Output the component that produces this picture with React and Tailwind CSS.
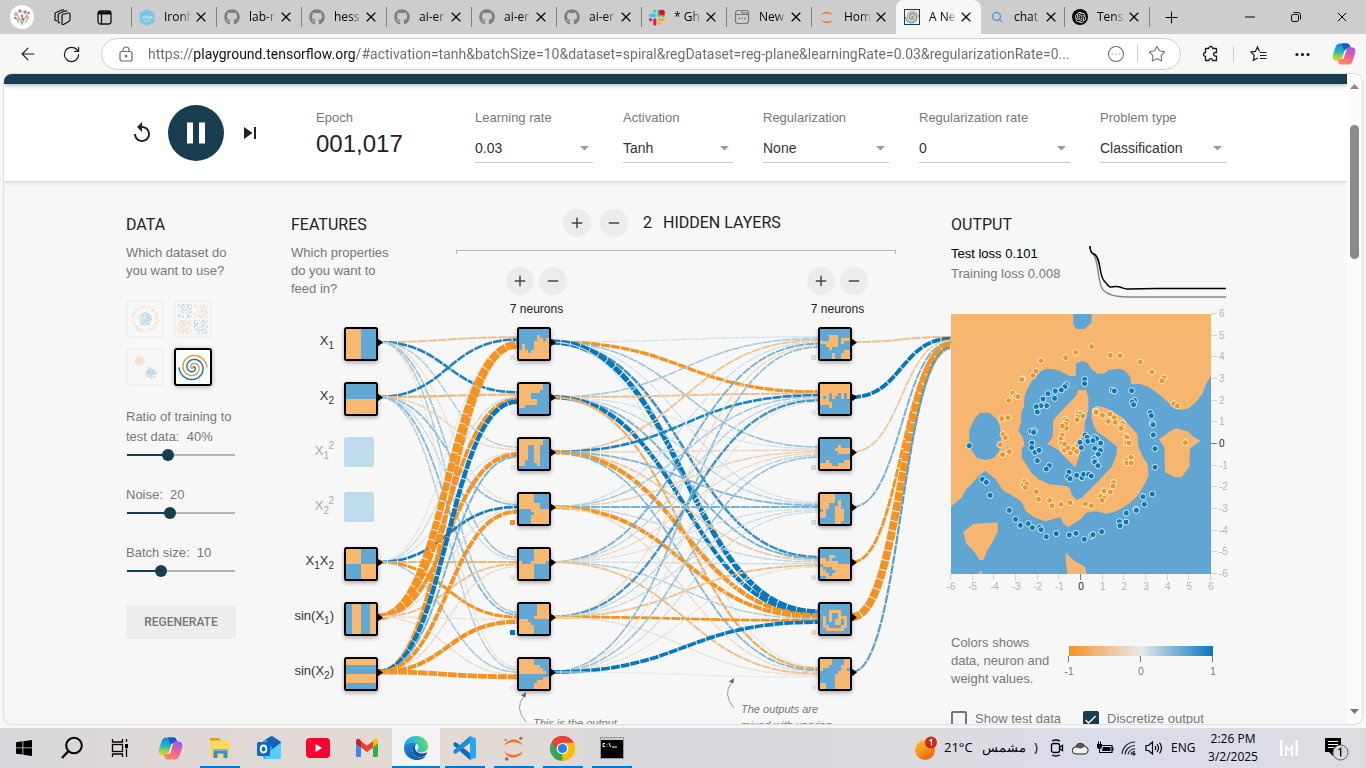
import React from "react";
import { FaGithub } from "react-icons/fa";
import { SiOpenai } from "react-icons/si";
import { MdReplay, MdPause, MdSkipNext, MdAdd, MdRemove, MdCheck } from "react-icons/md";
import { ArrowLeft, RotateCw, Star, Plus, Minus, X, Search, MoreHorizontal, CircleEllipsis } from "lucide-react";

const ORANGE = [245, 147, 34];
const GREY = [232, 234, 235];
const BLUE = [8, 119, 189];

function weightColor(w) {
  const end = w < 0 ? ORANGE : BLUE;
  const t = Math.min(1, Math.abs(w));
  const c = GREY.map((v, i) => Math.round(v + (end[i] - v) * t));
  return `rgb(${c.join(",")})`;
}

function makeRandom(seed) {
  let a = seed;
  return () => {
    a = (a + 0x6d2b79f5) | 0;
    let t = Math.imul(a ^ (a >>> 15), 1 | a);
    t = (t + Math.imul(t ^ (t >>> 7), 61 | t)) ^ t;
    return ((t ^ (t >>> 14)) >>> 0) / 4294967296;
  };
}

/* ---------- brand marks ---------- */

function CopilotMark({ size, id }) {
  return (
    <svg width={size} height={size} viewBox="0 0 24 24" aria-hidden="true">
      <defs>
        <linearGradient id={id + "a"} x1="0.3" y1="0" x2="0.2" y2="1">
          <stop offset="0" stopColor="#1b8be0" />
          <stop offset="0.45" stopColor="#22b4c8" />
          <stop offset="0.7" stopColor="#8ccf4d" />
          <stop offset="1" stopColor="#f6cf2e" />
        </linearGradient>
        <linearGradient id={id + "b"} x1="0.8" y1="0" x2="0.3" y2="1">
          <stop offset="0" stopColor="#9a5cf0" />
          <stop offset="0.5" stopColor="#ee5fa0" />
          <stop offset="1" stopColor="#ff8a4c" />
        </linearGradient>
      </defs>
      <path d="M8 1.5h7c1.6 0 2.3 1 2.8 2.5l.8 2.5h-3.2c-1.6 0-2.4 1-2.9 2.6l-2.4 7.4c-.5 1.5-1.3 2.3-2.8 2.3H4.2C1 18.8 0 16 1 12.5L3.3 5.5C4.2 2.8 5.5 1.5 8 1.5z" fill={`url(#${id}a)`} />
      <path d="M9.5 1.5H15c1.6 0 2.3 1 2.8 2.5l.8 2.5h-3.2c-1.6 0-2.4 1-2.9 2.6z" fill="#1556c9" />
      <path d="M16 22.5H9c-1.6 0-2.3-1-2.8-2.5l-.8-2.5h3.2c1.6 0 2.4-1 2.9-2.6l2.4-7.4c.5-1.5 1.3-2.3 2.8-2.3h3.1c3.2 0 4.2 2.8 3.2 6.3l-2.3 7c-.9 2.7-2.2 4-4.7 4z" fill={`url(#${id}b)`} />
      <path d="M10.3 17l2.9-9.5h1.2L11.5 17z" fill="#fff" />
    </svg>
  );
}

function JupyterMark({ size, moons }) {
  return (
    <svg width={size} height={size} viewBox="0 0 24 24" aria-hidden="true">
      <path d="M3 9.5C4.5 5.5 8 3.3 12 3.3s7.5 2.2 9 6.2C19 7.3 15.8 6 12 6S5 7.3 3 9.5z" fill="#f37726" />
      <path d="M3 14.5c1.5 4 5 6.2 9 6.2s7.5-2.2 9-6.2c-2 2.2-5.2 3.5-9 3.5s-7-1.3-9-3.5z" fill="#f37726" />
      {moons && (
        <g fill="#767677">
          <circle cx="19" cy="2.2" r="1.5" />
          <circle cx="5.5" cy="22" r="1.7" />
          <circle cx="4.5" cy="3.6" r="1" />
        </g>
      )}
    </svg>
  );
}

function SlackMark() {
  return (
    <svg width="17" height="17" viewBox="0 0 24 24" aria-hidden="true">
      <g fill="#36c5f0"><rect x="0" y="6.5" width="11" height="4.6" rx="2.3" /><rect x="6.4" y="0" width="4.6" height="4.6" rx="2" /></g>
      <g fill="#2eb67d"><rect x="13" y="0" width="4.6" height="11" rx="2.3" /><rect x="19.2" y="6.5" width="4.6" height="4.6" rx="2" /></g>
      <g fill="#ecb22e"><rect x="13" y="13" width="11" height="4.6" rx="2.3" /><rect x="13" y="19.2" width="4.6" height="4.6" rx="2" /></g>
      <g fill="#e01e5a"><rect x="6.4" y="13" width="4.6" height="11" rx="2.3" /><rect x="0" y="13" width="4.6" height="4.6" rx="2" /></g>
      <circle cx="19.5" cy="4.5" r="4.2" fill="#f00" />
    </svg>
  );
}

function IronMark() {
  return (
    <svg width="16" height="17" viewBox="0 0 16 17" aria-hidden="true">
      <path d="M8 0l7.5 4v9L8 17 .5 13V4z" fill="#7cc5e2" />
      <path d="M4 7v3M6 10V7h1.5v1.5H6M9 7h1.5v3H9zM12 10V7l1 3V7M4.5 12h7" stroke="#c4e8f4" fill="none" strokeWidth="0.8" />
    </svg>
  );
}

function PageMark() {
  return (
    <svg width="16" height="16" viewBox="0 0 16 16" fill="none" stroke="#777" strokeWidth="1.2" aria-hidden="true">
      <rect x="1.5" y="1.5" width="13" height="13" rx="2.5" />
      <path d="M1.5 5.5h13M8 1.5v2.5h6.5" />
      <path d="M4.5 9.5h1.5M7.2 9.5h1.5M10 9.5h1.5" strokeWidth="1.6" />
    </svg>
  );
}

function spiralPath(delta, cx, cy, radius) {
  const pts = [];
  for (let i = 0; i <= 60; i++) {
    const r = (i / 60) * radius;
    const t = 1.75 * (i / 60) * 2 * Math.PI + delta;
    pts.push(`${(cx + r * Math.sin(t)).toFixed(2)} ${(cy - r * Math.cos(t)).toFixed(2)}`);
  }
  return "M" + pts.join("L");
}

function SpiralMark() {
  return (
    <svg width="16" height="16" viewBox="0 0 16 16" aria-hidden="true">
      <rect x="0.5" y="0.5" width="15" height="15" fill="#e9f1f7" stroke="#183d4e" />
      <path d={spiralPath(0, 8, 8, 6.5)} fill="none" stroke="#4b9bd0" strokeWidth="1.3" />
      <path d={spiralPath(Math.PI, 8, 8, 6.5)} fill="none" stroke="#f0a850" strokeWidth="1.3" />
    </svg>
  );
}

/* ---------- browser chrome ---------- */

const TABS = [
  { title: "Ironh", icon: <IronMark /> },
  { title: "lab-r", icon: <FaGithub size={16} color="#7f7f7f" /> },
  { title: "hess", icon: <FaGithub size={16} color="#7f7f7f" /> },
  { title: "ai-er", icon: <FaGithub size={16} color="#7f7f7f" /> },
  { title: "ai-er", icon: <FaGithub size={16} color="#7f7f7f" /> },
  { title: "ai-er", icon: <FaGithub size={16} color="#7f7f7f" /> },
  { title: "* Gh", icon: <SlackMark /> },
  { title: "New", icon: <PageMark /> },
  { title: "Hom", icon: <JupyterMark size={19} /> },
  { title: "A Ne", icon: <SpiralMark />, active: true },
  { title: "chat", icon: <Search size={12} color="#5b9bd5" strokeWidth={3} />, bare: true },
  {
    title: "Tens",
    icon: (
      <span className="flex size-4 items-center justify-center rounded-full bg-black">
        <SiOpenai size={11} color="#fff" />
      </span>
    ),
  },
];

function Tab({ tab }) {
  const shell = tab.active
    ? "flex h-full w-[85px] shrink-0 items-center rounded-t-lg border-l border-[#f7f7f7] bg-[#f7f7f7]"
    : tab.bare
      ? "flex h-5 w-[83px] shrink-0 items-center border-l border-transparent"
      : "flex h-5 w-[85px] shrink-0 items-center border-l border-[#808080]";
  return (
    <div className={shell}>
      <button type="button" className="flex items-center gap-[9px] pl-[7px]">
        <span className="flex w-4 justify-center">{tab.icon}</span>
        <span className="w-[28px] whitespace-nowrap text-left text-xs text-black [mask-image:linear-gradient(to_right,black_60%,transparent)]">
          {tab.title}
        </span>
      </button>
      <button type="button" aria-label="Close tab" className="ml-px text-black">
        <X size={16} strokeWidth={1.75} />
      </button>
    </div>
  );
}

function BrowserTop() {
  return (
    <header className="font-['Open_Sans','Noto_Sans',sans-serif]">
      <div className="flex h-[34px] items-center bg-[#cdcdcd]">
        <div className="flex w-[131px] shrink-0 items-center pl-2.5">
          <svg width="24" height="24" viewBox="0 0 24 24" aria-hidden="true">
            <circle cx="12" cy="12" r="12" fill="#fff" />
            <path d="M12 20V9M12 19L7 9M12 19l5-10M9 18l-4-6M15 18l4-6" stroke="#8aa874" strokeWidth="1" />
            <g fill="#e9a58c"><circle cx="6" cy="9" r="2" /><circle cx="17" cy="12" r="1.8" /><circle cx="9" cy="14" r="1.6" /></g>
            <g fill="#9384b5"><circle cx="10" cy="6" r="1.8" /><circle cx="15" cy="7" r="1.8" /><circle cx="12" cy="11" r="1.3" /></g>
            <g fill="#b9605c"><circle cx="18.5" cy="8" r="1.2" /><circle cx="13" cy="14" r="1.2" /><circle cx="5.5" cy="13" r="1.2" /></g>
          </svg>
          <button type="button" aria-label="Workspaces" className="ml-5">
            <svg width="17" height="17" viewBox="0 0 17 17" fill="none" stroke="#111" strokeWidth="1.2">
              <path d="M8.5 5.5l6-1.5q1.5-.2 1.5 1.3v5.5q0 1-1 1.4l-5 3q-2 1-2-1V7q0-1.2.5-1.5z" />
              <path d="M6 13.5l-1 .3q-.8 0-.8-1V6q0-1 1-1.5l6-2.5q1.5-.5 1.8.7" />
              <path d="M3 11.5l-1 .2q-1 0-1-1V5q0-1 1-1.5l6-2.5q1.5-.5 1.8.5" />
            </svg>
          </button>
          <button type="button" aria-label="Tab actions" className="ml-[26px]">
            <svg width="15" height="15" viewBox="0 0 15 15" fill="none" stroke="#111" strokeWidth="1.3">
              <rect x="1" y="1" width="13" height="13" rx="2.5" />
              <path d="M1 3h13" strokeWidth="3" /><path d="M4.5 4v10" />
            </svg>
          </button>
        </div>
        <nav className="flex h-full items-center">
          {TABS.map((t, i) => <Tab key={i} tab={t} />)}
        </nav>
        <button type="button" aria-label="New tab" className="flex h-5 items-center border-l border-[#808080] pl-3">
          <Plus size={19} strokeWidth={1.25} />
        </button>
        <div className="ml-auto flex items-center gap-[30px] pr-4">
          <button type="button" aria-label="Minimize"><Minus size={16} strokeWidth={1.5} /></button>
          <button type="button" aria-label="Restore">
            <svg width="16" height="16" viewBox="0 0 16 16" fill="none" stroke="#111">
              <rect x="3.5" y="5.5" width="7" height="7" rx="1.5" />
              <path d="M5.5 3.5H10q2.5 0 2.5 2.5v4.5" />
            </svg>
          </button>
          <button type="button" aria-label="Close"><X size={16} strokeWidth={1.5} /></button>
        </div>
      </div>
      <div className="flex h-10 items-center bg-[#f7f7f7] text-[#1a1a1a]">
        <button type="button" aria-label="Back" className="ml-[18px]"><ArrowLeft size={20} strokeWidth={1.4} /></button>
        <button type="button" aria-label="Refresh" className="ml-6"><RotateCw size={19} strokeWidth={1.5} /></button>
        <div className="ml-5 flex h-8 min-w-0 flex-1 items-center rounded-full border border-[#cfcfcf] bg-white pl-[17px] text-[#6b6b6b]">
          <svg width="14" height="16" viewBox="0 0 14 16" fill="none" stroke="currentColor" strokeWidth="1.2" aria-hidden="true">
            <rect x="1" y="5.5" width="12" height="9.5" rx="2" />
            <path d="M4 5.5V4a3 3 0 0 1 6 0v1.5" /><circle cx="7" cy="10.2" r="0.8" fill="currentColor" />
          </svg>
          <input
            aria-label="Address"
            readOnly
            defaultValue="https://playground.tensorflow.org/#activation=tanh&batchSize=10&dataset=spiral&regDataset=reg-plane&learningRate=0.03&regularizationRate=0..."
            className="ml-[15px] min-w-0 flex-1 bg-[linear-gradient(to_right,#6b6b6b_46px,#111_46px,#111_208px,#6b6b6b_208px)] bg-clip-text font-['Roboto',sans-serif] text-sm text-transparent outline-none"
          />
          <button type="button" aria-label="Site options" className="ml-3"><CircleEllipsis size={18} strokeWidth={1.4} /></button>
          <span className="ml-3 h-[18px] w-px bg-[#cfcfcf]" />
          <button type="button" aria-label="Favorite" className="ml-2.5 mr-3.5"><Star size={18} strokeWidth={1.4} /></button>
        </div>
        <button type="button" aria-label="Extensions" className="ml-5">
          <svg width="18" height="18" viewBox="0 0 18 18" fill="none" stroke="#1a1a1a" strokeWidth="1.3" strokeLinejoin="round">
            <path d="M5.5 3.5h2.2a2 2 0 0 1 4 0h3.8v4h-1.2a1.8 1.8 0 0 0 0 3.6h1.2v4.4h-4a1.8 1.8 0 0 0-3.6 0H4.5v-4a2 2 0 1 1 0-4v-4z" />
          </svg>
        </button>
        <span className="ml-3.5 h-4 w-px bg-[#cfcfcf]" />
        <button type="button" aria-label="Favorites" className="ml-4">
          <svg width="17" height="17" viewBox="0 0 17 17" fill="none" stroke="#1a1a1a" strokeWidth="1.2">
            <path d="M9.5 5.5L7.5 1 5.4 5.4.8 6l3.4 3.3-.8 5L7.8 12M10 6.5h6.5M10 9.5h6.5M10 12.5h6.5" />
          </svg>
        </button>
        <button type="button" aria-label="More" className="ml-[26px]"><MoreHorizontal size={19} strokeWidth={2} /></button>
        <button type="button" aria-label="Copilot" className="ml-5 mr-2.5"><CopilotMark size={24} id="cpTop" /></button>
      </div>
    </header>
  );
}

/* ---------- controls bar ---------- */

const SELECTS = [
  { id: "rate", label: "Learning rate", value: "0.03", width: "w-[118px]" },
  { id: "act", label: "Activation", value: "Tanh", width: "w-[110px]" },
  { id: "reg", label: "Regularization", value: "None", width: "w-[126px]" },
  { id: "regRate", label: "Regularization rate", value: "0", width: "w-[151px]" },
  { id: "problem", label: "Problem type", value: "Classification", width: "w-[126px]" },
];

function ControlsBar() {
  return (
    <section className="border-b border-[#dcdcdc] bg-white shadow-[0_1px_4px_rgba(0,0,0,0.12)]">
      <div className="mx-auto flex h-[97px] max-w-[1101px] items-center pl-px">
        <div className="flex w-[190px] items-center gap-3.5 pl-1">
          <button type="button" aria-label="Reset"><MdReplay size={24} color="#222" /></button>
          <button type="button" aria-label="Pause" className="flex size-14 items-center justify-center rounded-full bg-[#183d4e] text-white">
            <MdPause size={36} />
          </button>
          <button type="button" aria-label="Step"><MdSkipNext size={24} color="#222" /></button>
        </div>
        <div className="w-[159px] pt-0.5">
          <div className="text-[13px] leading-5 text-[#777]">Epoch</div>
          <output className="block text-2xl leading-8 text-[#222]">001,017</output>
        </div>
        <div className="flex gap-[30px] pt-1.5">
          {SELECTS.map((s) => (
            <div key={s.id} className={s.width}>
              <label htmlFor={s.id} className="block text-[13px] leading-5 text-[#777]">{s.label}</label>
              <div className="relative mt-2 border-b border-[#c8c8c8] pb-0.5">
                <select id={s.id} className="block h-6 w-full appearance-none bg-transparent text-sm text-[#333] outline-none">
                  <option>{s.value}</option>
                </select>
                <svg className="pointer-events-none absolute right-1 top-2.5" width="9" height="5" viewBox="0 0 9 5" aria-hidden="true">
                  <path d="M0 0h9L4.5 4.5z" fill="#999" />
                </svg>
              </div>
            </div>
          ))}
        </div>
      </div>
    </section>
  );
}

/* ---------- data column ---------- */

function scatter(kind) {
  const rnd = makeRandom(kind.length * 7919 + 13);
  const gauss = () => rnd() + rnd() + rnd() + rnd() - 2;
  const pts = [];
  if (kind === "circle") {
    for (let i = 0; i < 150; i++) {
      const r = Math.sqrt(rnd()) * 6.5, a = rnd() * 6.283;
      pts.push([17 + r * Math.cos(a), 17 + r * Math.sin(a), 1]);
    }
    for (let i = 0; i < 140; i++) {
      const r = 10.5 + rnd() * 3.5, a = rnd() * 6.283;
      pts.push([17 + r * Math.cos(a), 17 + r * Math.sin(a), 0]);
    }
  } else if (kind === "xor") {
    for (let i = 0; i < 420; i++) {
      const x = 2 + rnd() * 30, y = 2 + rnd() * 30;
      if (Math.abs(x - 17) > 1 && Math.abs(y - 17) > 1) pts.push([x, y, (x < 17) === (y < 17) ? 1 : 0]);
    }
  } else {
    for (let i = 0; i < 200; i++) {
      pts.push([11.5 + gauss() * 3.6, 11 + gauss() * 3.6, 0]);
      pts.push([23 + gauss() * 3.6, 23 + gauss() * 3.6, 1]);
    }
  }
  return pts;
}

function DatasetButton({ kind, selected }) {
  const cls = selected
    ? "size-[38px] rounded-[3px] border-2 border-black bg-white shadow-[0_1px_5px_rgba(0,0,0,0.3)]"
    : "size-[38px] rounded-[3px] border-2 border-[#f0f0f0]";
  return (
    <button type="button" aria-label={kind} className={cls}>
      <svg width="34" height="34" viewBox="0 0 34 34">
        {kind === "spiral" ? (
          <g fill="none" strokeWidth="1.4">
            <path d={spiralPath(0, 17, 17.5, 14)} stroke="#0877bd" />
            <path d={spiralPath(Math.PI, 17, 17.5, 14)} stroke="#f59322" />
          </g>
        ) : (
          scatter(kind).map((p, i) => (
            <rect key={i} x={Math.floor(p[0])} y={Math.floor(p[1])} width="1" height="1" fill={p[2] ? "#c3dbea" : "#f7e0c8"} />
          ))
        )}
      </svg>
    </button>
  );
}

function Slider({ id, label, text, min, max, value, step }) {
  const p = ((value - min) / (max - min)) * 100;
  return (
    <div className="mt-[22px]">
      <label htmlFor={id} className="block text-[13px] leading-5">{`${label}\u00a0 ${text}`}</label>
      <input
        id={id}
        type="range"
        min={min}
        max={max}
        step={step}
        defaultValue={value}
        style={{ backgroundImage: `linear-gradient(to right,#183d4e ${p}%,#b5b5b5 ${p}%)` }}
        className="-mx-[5px] block h-4 w-[120px] appearance-none bg-[length:calc(100%-12px)_2px] bg-center bg-no-repeat [&::-webkit-slider-thumb]:size-3 [&::-webkit-slider-thumb]:appearance-none [&::-webkit-slider-thumb]:rounded-full [&::-webkit-slider-thumb]:bg-[#183d4e]"
      />
    </div>
  );
}

function Heading({ children }) {
  return <h2 className="font-['Roboto',sans-serif] text-base leading-6 text-[#222]">{children}</h2>;
}

function DataColumn() {
  return (
    <section className="w-[165px] shrink-0 pl-px pt-[31px] text-[13px] text-[#777]">
      <Heading>DATA</Heading>
      <p className="mt-[7px] w-[110px] leading-[18px]">Which dataset do you want to use?</p>
      <div className="mt-5 grid w-[86px] grid-cols-2 gap-2.5">
        <DatasetButton kind="circle" />
        <DatasetButton kind="xor" />
        <DatasetButton kind="gauss" />
        <DatasetButton kind="spiral" selected />
      </div>
      <div className="-mt-px w-[110px]">
        <Slider id="ratio" label="Ratio of training to test data:" text="40%" min={10} max={90} step={10} value={40} />
        <Slider id="noise" label="Noise:" text="20" min={0} max={50} step={5} value={20} />
        <Slider id="batch" label="Batch size:" text="10" min={1} max={30} step={1} value={10} />
        <button type="button" className="mt-[26px] h-[34px] w-full rounded-[2px] bg-[#ededed] font-['Roboto',sans-serif] text-xs font-medium text-[#777]">
          REGENERATE
        </button>
      </div>
    </section>
  );
}

/* ---------- network ---------- */

const B = "BBBBBBBBBB";
const O = "OOOOOOOOOO";
const repeat = (row, n) => Array(n).fill(row);

const FEATURES = [
  { y: 342, base: "X", sub: "1", map: repeat("OOOOOBBBBB", 10) },
  { y: 397, base: "X", sub: "2", map: [...repeat(B, 5), ...repeat(O, 5)] },
  { y: 452, base: "X", sub: "1", sup: "2", off: true },
  { y: 507, base: "X", sub: "2", sup: "2", off: true },
  { y: 562, pair: true, map: [...repeat("OOOOOBBBBB", 5), ...repeat("BBBBBOOOOO", 5)] },
  { y: 617, sin: "1", map: repeat("BBOOOBBBOO", 10) },
  { y: 672, sin: "2", map: [O, O, B, B, B, O, O, O, B, B] },
];

const ROWS = [342, 397, 452, 507, 562, 617, 672];
const INPUT_ROWS = [342, 397, 562, 617, 672];

const LAYER1 = [
  [B, B, "BBBBBBOBBB", "BBBBBBOOBO", "BBBBBOOOOO", "BOBBBOOOOO", "BOBBBOOOOO", "OOOBOOOOOO", O, O],
  ["OOOOOOOOBB", "OOOOOOOOBB", "OOOOOOOBBB", "OOOOBBBBBB", "OOOOBBBBBB", "OOOOOOBBBB", "OOOOOOBBBB", "OOBBBBBBBB", B, B],
  ["OOOOOOOOBB", "OOOOOOOOBB", ...repeat("OOOBBOOBBB", 5), "OOBBBOOBBB", "OOBBBBOBBB", B],
  ["OOOOOBBBBB", "OOOOOBBBBB", "OOOOOBBBBB", "OOOOOOOBBB", "OOOOOOOBBB", "BBBBOOOOOO", "BBBBBOOOOO", ...repeat("BBBBOOOOOO", 3)],
  [...repeat("BBBBBOOOOO", 4), "OBBBOOOOOB", ...repeat("OOOOOBBBBB", 5)],
  [...repeat("BBBBBBOOOO", 4), "BBBBBOOOOO", "OOOBBBBBBB", "OOOOBBBBBB", ...repeat("OOOOOBBBBB", 3)],
  ["OOOOOBBBBB", "OOOOOBBBBB", "OOOOOOOBBB", "OOOOOOOOBB", "OOOOOOOOOB", B, "BBBBBBBBOO", "BBBBBBOOOO", "BBBBBOOOOO", "BBBBBOOOOO"],
];

const LAYER2 = [
  [B, B, "BBBOOOBBBB", "BBBOOOBOOO", "OOOOOOBOBB", "BBOOOOBBBB", "BBBOBBBBBB", "BBBBBBBBOO", "BBBBOBBOOO", "BBBBOBBOOO"],
  [O, O, O, "OOOBOOBOBO", "OBOBOBBOBO", "OOOBBBBBBB", "OOOOBBBBBB", "BBBOBBBBBB", B, B],
  [B, B, "BBBBBBOBBB", "BBBBBOOOOO", "BBBBBBOOOO", B, B, "BBOBBBBBOO", "OOOOBBOOOO", O],
  ["OOOOOBBBBB", "OOOOOBBBBB", "OOOOOBOBBB", "OOOBBBOBBB", "OOOBBOOBBB", "BOBBBOOOBB", "OOBBBOOOBB", "OOBBBOOOBB", "BBBBBOOOBB", "BBBBBOOBBB"],
  [B, B, "BBBOOBBBBB", "OOBOBBBBBB", "OOOOOOBBBB", "BOOOOOOOOO", "OBBBOOOOOO", "OOBBBOOOOO", "OOOBOOOOOO", "BBOOOOOOOO"],
  [B, B, "BBBOOOOBBB", "BBBOBBOBBB", "BOBOBBOOOB", "BOBOBOOBOB", "BOBBBOOBOB", "BOOBBBBOOB", "BBOOOOOOBB", B],
  ["OOOOBBBBOO", "OOOOBBBBOO", "OOOBBBBOOO", "OBBBBBBOOB", "BBBBBBOOOO", "BBBBBOOOOO", "BBBBBOOOOO", "BBBBBOOOOO", "OOBBBOOOOO", "OOBBBOOOOO"],
];

const W1 = [
  [-0.5, 0.9, 0.25, -0.15, 0.35, 0.3, -0.12],
  [0.9, -0.6, -0.25, 0.4, 0.15, 0.45, 0.25],
  [0.05, 0.15, 0.1, 0.95, -0.6, -1.1, 0.3],
  [-3.2, -1.5, -1.7, 0.1, -0.5, -0.15, -0.2],
  [-1.5, 2, 0.5, -1.6, -0.2, -1.8, -2.1],
];

const W2 = [
  [0.1, -1.3, 0.35, 0.1, 0.8, 2.4, 0.05],
  [0.3, -0.5, 0.08, 0.2, 0.5, 1.8, -0.7],
  [-0.45, 0.9, -0.25, 0.45, -0.4, -1.9, 0.45],
  [0.12, 0.3, -0.3, 0.5, 0.18, -1.6, -0.2],
  [0.5, 0.2, -0.2, 0.1, 0.15, 0.25, -0.5],
  [-0.2, 0.75, 0.2, 0.15, -0.5, -1, -0.15],
  [0.4, -0.1, 0.35, 0.12, -0.12, 1.5, 0.03],
];

const W3 = [-0.5, 1.6, -0.4, 0.5, -1, -3.8, 0.65];

const BIAS1 = [-0.1, -0.02, 0.03, -1, -0.1, 1, -0.02];
const BIAS2 = [0.1, -0.03, 0.15, 0.12, 0.08, -0.2, 0.02];

function Link({ x1, y1, x2, y2, w }) {
  const mx = (x1 + x2) / 2;
  return (
    <path
      d={`M${x1} ${y1}C${mx} ${y1} ${mx} ${y2} ${x2} ${y2}`}
      stroke={weightColor(w)}
      strokeWidth={1 + (9 * Math.abs(w)) / 5}
      strokeDasharray="9 1"
      fill="none"
    />
  );
}

function Tile({ x, y, map }) {
  const cells = [];
  map.forEach((row, r) => {
    let c = 0;
    while (c < 10) {
      let e = c;
      while (e < 10 && row[e] === row[c]) e++;
      if (row[c] === "O") {
        const left = c === 0 ? -3 : c * 3;
        const right = e === 10 ? 33 : e * 3;
        const top = r === 0 ? -3 : r * 3;
        const bottom = r === 9 ? 33 : (r + 1) * 3;
        cells.push(<rect key={r + "-" + c} x={left} y={top} width={right - left} height={bottom - top} fill="#f9b870" />);
      }
      c = e;
    }
  });
  return (
    <g transform={`translate(${x} ${y - 15})`}>
      <rect x="0" y="0" width="34" height="34" rx="2.5" fill="#000" filter="url(#tileShadow)" />
      <path d="M33 11l6 4.5-6 4.5z" fill="#000" />
      <g transform="translate(2 2)" clipPath="url(#tileClip)">
        <rect width="30" height="30" fill="#62a8d5" />
        <g filter="url(#tileSmooth)">{cells}</g>
      </g>
    </g>
  );
}

function FeatureLabel({ f }) {
  const small = "text-[10px]";
  if (f.sup) {
    return (
      <g fill="#aaa">
        <text x="329" y={f.y + 3} textAnchor="end" className="text-[13px]">X<tspan dy="4" className={small}>{f.sub}</tspan></text>
        <text x="334" y={f.y - 3} textAnchor="end" className={small}>{f.sup}</text>
      </g>
    );
  }
  if (f.pair) {
    return (
      <text x="334" y={f.y + 3} textAnchor="end" fill="#333" className="text-[13px]">
        X<tspan dy="4" className={small}>1</tspan><tspan dy="-4">X</tspan><tspan dy="4" className={small}>2</tspan>
      </text>
    );
  }
  if (f.sin) {
    return (
      <text x="334" y={f.y + 3} textAnchor="end" fill="#333" className="text-[13px]">
        sin(X<tspan dy="4" className={small}>{f.sin}</tspan><tspan dy="-4">)</tspan>
      </text>
    );
  }
  return (
    <text x="334" y={f.y + 3} textAnchor="end" fill="#333" className="text-[13px]">
      {f.base}<tspan dy="4" className={small}>{f.sub}</tspan>
    </text>
  );
}

function Network() {
  const offset = (i, n) => ((i - (n - 1) / 2) / n) * 12;
  return (
    <svg viewBox="290 325 661 420" width="661" height="420" className="block" role="img" aria-label="Neural network">
      <defs>
        <filter id="tileShadow" x="-30%" y="-30%" width="160%" height="170%">
          <feDropShadow dx="0" dy="2" stdDeviation="2" floodColor="#000" floodOpacity="0.3" />
        </filter>
        <filter id="tileSmooth"><feGaussianBlur stdDeviation="0.7" /></filter>
        <clipPath id="tileClip"><rect width="30" height="30" /></clipPath>
      </defs>
      {W1.map((ws, s) => ws.map((w, d) => (
        <Link key={`a${s}-${d}`} x1={378} y1={INPUT_ROWS[s]} x2={517} y2={ROWS[d] + offset(s, 5)} w={w} />
      )))}
      {W2.map((ws, s) => ws.map((w, d) => (
        <Link key={`b${s}-${d}`} x1={551} y1={ROWS[s]} x2={818} y2={ROWS[d] + offset(s, 7)} w={w} />
      )))}
      {W3.map((w, s) => (
        <Link key={`c${s}`} x1={852} y1={ROWS[s]} x2={951} y2={342 + offset(s, 7)} w={w} />
      ))}
      {FEATURES.map((f) => (
        <g key={f.y}>
          <FeatureLabel f={f} />
          {f.off
            ? <rect x="344" y={f.y - 15} width="30" height="30" rx="2.5" fill="#c0daed" />
            : <Tile x={344} y={f.y} map={f.map} />}
        </g>
      ))}
      {ROWS.map((y, i) => (
        <g key={y}>
          <rect x="510" y={y + 13} width="5" height="5" fill={weightColor(BIAS1[i])} />
          <rect x="811" y={y + 13} width="5" height="5" fill={weightColor(BIAS2[i])} />
          <Tile x={517} y={y} map={LAYER1[i]} />
          <Tile x={818} y={y} map={LAYER2[i]} />
        </g>
      ))}
      <g fill="none" stroke="#999">
        <path d="M526 722q-12-14-2-26" />
        <path d="M734 708q-12-14-2-26" />
      </g>
      <path d="M526 692l-5 3.5 4.5 2zM734 678l-5 3.5 4.5 2z" fill="#666" />
      <g fill="#777" className="text-[11px] italic">
        <text x="533" y="727">This is the output</text>
        <text x="741" y="713">The outputs are</text>
        <text x="741" y="729">mixed with varying</text>
      </g>
    </svg>
  );
}

function PlusMinus({ what }) {
  const cls = "flex size-7 items-center justify-center rounded-full bg-[#ececec] text-[#444]";
  return (
    <>
      <button type="button" aria-label={`Add ${what}`} className={cls}><MdAdd size={18} /></button>
      <button type="button" aria-label={`Remove ${what}`} className={cls}><MdRemove size={18} /></button>
    </>
  );
}

function NeuronControls() {
  return (
    <div>
      <div className="flex gap-[5px]"><PlusMinus what="neuron" /></div>
      <div className="mt-1 text-center text-xs leading-5 text-[#222]">7 neurons</div>
    </div>
  );
}

function NetworkColumn() {
  return (
    <section className="w-[661px] shrink-0">
      <div className="flex h-[143px]">
        <div className="w-[166px] pl-px pt-[31px] text-[13px] text-[#777]">
          <Heading>FEATURES</Heading>
          <p className="mt-[7px] w-[110px] leading-[18px]">Which properties do you want to feed in?</p>
        </div>
        <div className="w-[440px] pt-[27px]">
          <div className="flex items-center gap-[9px] pl-[107px]">
            <PlusMinus what="layer" />
            <div className="ml-1.5 font-['Roboto',sans-serif] text-base leading-6 text-[#222]">
              2<span className="ml-[11px]">HIDDEN LAYERS</span>
            </div>
          </div>
          <div className="mt-[13px] h-1 border-x border-t border-[#b5b5b5]" />
          <div className="mt-[13px] flex justify-between pl-[50px] pr-7">
            <NeuronControls />
            <NeuronControls />
          </div>
        </div>
      </div>
      <Network />
    </section>
  );
}

/* ---------- output ---------- */

const ORANGE_DOTS = [
  [485, 350], [437, 367], [541, 376], [570, 377], [407, 383], [333, 392], [631, 396], [318, 424], [309, 437], [666, 426],
  [702, 443], [696, 452], [278, 447], [275, 449], [248, 489], [257, 498], [264, 500], [236, 512], [731, 521], [742, 528],
  [215, 566], [234, 563], [219, 614], [226, 623], [210, 644], [238, 665], [218, 674], [766, 638], [445, 549], [452, 552],
  [459, 558], [443, 561], [441, 569], [496, 543], [498, 547], [517, 556], [540, 552], [553, 563], [535, 574], [556, 577],
  [578, 580], [576, 590], [573, 595], [406, 568], [411, 573], [407, 583], [409, 595], [397, 588], [397, 616], [393, 627],
  [395, 640], [399, 655], [403, 661], [404, 642], [414, 654], [421, 669], [431, 657], [440, 665], [444, 645], [587, 617],
  [591, 622], [590, 638], [597, 639], [590, 691], [591, 699], [603, 682], [604, 699], [284, 755], [280, 766], [290, 762],
  [286, 773], [319, 785], [326, 808], [359, 811], [366, 827], [393, 823], [420, 818], [466, 822], [484, 827], [551, 758],
  [549, 768], [522, 783], [541, 786], [513, 799], [522, 804], [516, 811],
];

const BLUE_DOTS = [
  [464, 448], [464, 461], [409, 464], [405, 470], [394, 480], [376, 483], [374, 505], [354, 491], [339, 507], [350, 527],
  [333, 527], [319, 530], [322, 546], [547, 480], [553, 483], [605, 482], [614, 511], [607, 516], [611, 524], [661, 548],
  [664, 557], [667, 579], [669, 584], [670, 615], [675, 656], [675, 712], [118, 647], [303, 604], [313, 602], [311, 607],
  [306, 639], [305, 653], [315, 667], [327, 661], [322, 692], [358, 707], [349, 717], [157, 748], [169, 757], [180, 796],
  [238, 841], [257, 868], [271, 886], [295, 881], [307, 893], [329, 892], [333, 899], [349, 920], [379, 911], [418, 915],
  [438, 910], [463, 928], [484, 918], [489, 914], [515, 905], [568, 875], [570, 887], [588, 876], [589, 849], [618, 837],
  [619, 841], [643, 823], [639, 800], [667, 792], [450, 637], [454, 653], [465, 615], [471, 622], [473, 634], [494, 622],
  [500, 626], [489, 632], [512, 639], [494, 655], [511, 661], [505, 673], [493, 686], [497, 692], [494, 696], [504, 707],
  [417, 726], [413, 740], [420, 746], [440, 736], [456, 743], [461, 733], [476, 733], [484, 738],
];

const TICKS = [-6, -5, -4, -3, -2, -1, 0, 1, 2, 3, 4, 5, 6];

function HeatMap() {
  const o = "#f6b66f";
  const b = "#61a6d3";
  return (
    <svg viewBox="945 308 284 286" width="284" height="286" className="-ml-1.5 -mt-1.5 block" role="img" aria-label="Decision boundary">
      <svg x="951" y="314" width="260" height="260" viewBox="63 252 780 780">
        <rect x="63" y="252" width="780" height="780" fill={b} />
        <polygon fill={o} points="63,252 843,252 843,438 828,462 817,492 800,514 778,534 757,540 738,534 715,518 690,495 657,472 630,462 603,462 601,440 585,422 570,416 535,420 522,431 502,431 485,418 472,400 457,392 438,402 437,438 418,438 392,424 370,417 345,417 325,430 302,458 290,482 283,500 282,530 274,550 273,580 265,602 278,620 284,645 275,655 276,685 292,708 304,728 326,748 358,763 410,768 420,775 424,792 440,810 455,803 480,778 510,748 545,710 559,675 561,650 530,625 502,606 490,585 484,560 488,538 500,527 522,532 550,545 580,565 603,592 622,612 626,652 638,680 652,700 656,735 645,760 622,798 595,823 560,843 527,851 500,844 468,848 452,868 415,891 402,882 390,862 345,874 312,862 286,842 275,815 247,797 218,780 197,748 165,722 146,738 130,756 107,780 97,800 63,830" />
        <polygon fill={o} points="445,480 468,480 475,500 475,540 465,575 462,605 452,640 447,682 436,711 415,692 385,660 352,642 368,622 370,570 388,550 412,524 438,497" />
        <polygon fill={b} points="430,252 485,252 485,278 463,297 440,297 430,282" />
        <polygon fill={b} points="150,548 178,548 200,566 210,590 214,625 207,665 190,685 165,690 140,683 118,652 118,600 135,564" />
        <polygon fill={o} points="722,603 738,595 775,605 790,620 812,632 790,648 780,656 778,710 755,742 735,742 705,727 703,652 687,628" />
        <polygon fill={o} points="100,905 130,882 203,877 203,905 187,938 172,960 160,990 150,990 130,962 108,940" />
        <polygon fill={o} points="407,968 432,992 465,1010 470,1032 413,1032 408,1000" />
        <rect x="148" y="1024" width="9" height="8" fill={o} />
        <g stroke="#fff" strokeOpacity="0.8" strokeWidth="3">
          {ORANGE_DOTS.map((p, i) => <circle key={"o" + i} cx={p[0]} cy={p[1]} r="9" fill="#f59322" />)}
          {BLUE_DOTS.map((p, i) => <circle key={"b" + i} cx={p[0]} cy={p[1]} r="9" fill="#0877bd" />)}
        </g>
      </svg>
      <g className="text-[10px]">
        {TICKS.map((t) => {
          const x = 1081 + (t * 260) / 12;
          const y = 444 - (t * 260) / 12;
          const fill = t === 0 ? "#222" : "#b5b5b5";
          return (
            <g key={t} fill={fill} stroke="none">
              <rect x={Math.round(x) - 1} y="574" width="1" height="6" fill={t === 0 ? "#777" : "#d5d5d5"} />
              <text x={x} y="590" textAnchor="middle">{t}</text>
              <rect x="1211" y={Math.round(y) - 1} width="6" height="1" fill={t === 0 ? "#777" : "#d5d5d5"} />
              <text x="1219" y={y + 3}>{t}</text>
            </g>
          );
        })}
      </g>
    </svg>
  );
}

function OutputColumn() {
  return (
    <section className="w-[275px] shrink-0 pt-[31px] text-[13px] text-[#777]">
      <Heading>OUTPUT</Heading>
      <div className="mt-[7px] flex h-[70px] justify-between">
        <div className="leading-5">
          <div className="text-black">Test loss 0.101</div>
          <div>Training loss 0.008</div>
        </div>
        <svg width="137" height="56" viewBox="1089 244 137 56" fill="none" aria-label="Loss history" role="img">
          <path d="M1090 246c0 5 1 7 3 8 3 3 4 9 5 17 1 8 2 15 5 19 4 4 10 7 24 7h99" stroke="#888" strokeWidth="1.5" />
          <path d="M1090 246c0 5 1 7 4 8 4 2 5 8 6 14 1 7 2 11 5 14 2 2 3 4 5 5 3 0 6-1 10 0 3 1 4 2 7 2l30-.5h69" stroke="#000" strokeWidth="1.5" />
        </svg>
      </div>
      <HeatMap />
      <div className="mt-10 flex gap-1">
        <p className="w-[108px] leading-[18px]">Colors shows data, neuron and weight values.</p>
        <svg width="156" height="36" viewBox="1063 642 156 36" className="mt-2" role="img" aria-label="Color scale">
          <defs>
            <linearGradient id="scale">
              <stop offset="0" stopColor="#f59322" /><stop offset="0.5" stopColor="#e8eaeb" /><stop offset="1" stopColor="#0877bd" />
            </linearGradient>
          </defs>
          <rect x="1069" y="646" width="144" height="10" fill="url(#scale)" />
          <path d="M1068.5 656v6M1140.5 656v6M1212.5 656v6" stroke="#777" />
          <g fill="#777" textAnchor="middle" className="text-[10px]">
            <text x="1069" y="675">-1</text><text x="1141" y="675">0</text><text x="1213" y="675">1</text>
          </g>
        </svg>
      </div>
      <div className="mt-5 flex">
        <label className="flex w-[132px] items-center gap-2 leading-[22px]">
          <input type="checkbox" className="size-4 appearance-none rounded-[2px] border-2 border-[#757575]" />
          Show test data
        </label>
        <label className="relative flex items-center gap-2 leading-[22px]">
          <input type="checkbox" defaultChecked className="size-4 appearance-none rounded-[2px] bg-[#183d4e]" />
          <MdCheck size={15} color="#fff" className="pointer-events-none absolute left-0 top-1" />
          Discretize output
        </label>
      </div>
    </section>
  );
}

function Page() {
  return (
    <div className="flex min-h-0 flex-1 bg-[#f7f7f7] px-1 pb-1">
      <div className="flex min-w-0 flex-1 overflow-hidden rounded-lg bg-[#f7f7f7] shadow-[0_0_2px_rgba(0,0,0,0.35)]">
        <main className="min-w-0 flex-1 overflow-hidden font-['Liberation_Sans',Arial,sans-serif]">
          <div className="relative h-2.5 bg-[#183d4e] shadow-[0_1px_5px_rgba(0,0,0,0.35)]" />
          <ControlsBar />
          <div className="mx-auto flex max-w-[1101px]">
            <DataColumn />
            <NetworkColumn />
            <OutputColumn />
          </div>
        </main>
        <div className="flex w-[15px] shrink-0 flex-col items-center bg-[#fcfcfc] py-2.5" aria-hidden="true">
          <svg width="9" height="5" viewBox="0 0 9 5"><path d="M0 5h9L4.5 0z" fill="#888" /></svg>
          <div className="mt-9 h-[134px] w-[9px] rounded-full bg-[#8a8a8a]" />
          <svg width="9" height="5" viewBox="0 0 9 5" className="mt-auto"><path d="M0 0h9L4.5 5z" fill="#777" /></svg>
        </div>
      </div>
    </div>
  );
}

/* ---------- taskbar ---------- */

const APPS = [
  { name: "Copilot", icon: <CopilotMark size={25} id="cpTask" /> },
  {
    name: "File Explorer", open: true,
    icon: (
      <svg width="24" height="24" viewBox="0 0 24 24">
        <path d="M2 2h9l2 3v4H2z" fill="#dba118" /><path d="M2 4.5h20V21H2z" fill="#ffd766" />
        <path d="M5.5 13h14v9h-4v-4.5h-6V22h-4z" fill="#2f8fd8" /><path d="M5.5 13h14v2h-14z" fill="#6fb9ea" />
      </svg>
    ),
  },
  {
    name: "Outlook",
    icon: (
      <svg width="26" height="26" viewBox="0 0 26 26">
        <path d="M7 6l8-5 10 6v14q0 3-3 3H9q-2 0-2-2z" fill="#28a8ea" /><path d="M10 4.5L16 1l9 6-8 7z" fill="#1a5fb4" />
        <path d="M25 8L9 20v2q0 2 2 2h11q3 0 3-3z" fill="#50d0f8" />
        <rect x="1" y="7" width="13" height="14" rx="1.5" fill="#0f6cbd" />
        <ellipse cx="7.5" cy="14" rx="2.8" ry="3.5" fill="none" stroke="#fff" strokeWidth="1.8" />
      </svg>
    ),
  },
  {
    name: "YouTube",
    icon: (
      <svg width="24" height="24" viewBox="0 0 24 24"><rect x="0" y="2" width="24" height="20" rx="4" fill="#ff0033" /><path d="M9.5 8v8l6.5-4z" fill="#fff" /></svg>
    ),
  },
  {
    name: "Gmail",
    icon: (
      <svg width="24" height="24" viewBox="0 0 24 24">
        <path d="M1 6v13.5q0 1.5 1.5 1.5H6V10z" fill="#4285f4" /><path d="M23 6v13.5q0 1.5-1.5 1.5H18V10z" fill="#34a853" />
        <path d="M18 5v6.5l5-4V5.5q0-4-4-2z" fill="#fbbc04" /><path d="M1 7.5l5 4V5L5 3.5q-4-2-4 2z" fill="#c5221f" />
        <path d="M6 5l6 4.6L18 5v6.5l-6 4.6-6-4.6z" fill="#ea4335" />
      </svg>
    ),
  },
  {
    name: "Edge", open: true, active: true,
    icon: (
      <svg width="26" height="26" viewBox="0 0 26 26">
        <defs>
          <linearGradient id="eg1" x1="0" y1="0.5" x2="1" y2="0.3"><stop offset="0" stopColor="#1b9de2" /><stop offset="0.5" stopColor="#2cc3c8" /><stop offset="1" stopColor="#6be04b" /></linearGradient>
          <linearGradient id="eg2" x1="0" y1="0" x2="1" y2="1"><stop offset="0" stopColor="#1b8fe0" /><stop offset="1" stopColor="#0c4a9a" /></linearGradient>
        </defs>
        <path d="M1 12C1.5 5.5 6.5 1 13 1c7 0 12 5 12 10.5 0 3.5-3 6-6.5 6-3 0-4.5-1-4.5-2 0-.7 1.5-1.5 1.5-3.5 0-2.5-2.5-4.5-6-4.5C5.5 7.5 2 9.5 1 12z" fill="url(#eg1)" />
        <path d="M1 12c1-3 4.5-4.5 8.5-4.5 2 0 3.5.5 4.5 1.5-3.5.5-5 3.5-4.5 7 .6 4.5 4.5 7 9 6.5 1.5-.2 3-.8 4.5-1.5-2 2.5-5.5 4-9 4C6.5 25 .5 19.5 1 12z" fill="url(#eg2)" />
        <path d="M9.5 16c-.5-3.5 1-6 3.5-6.5-1 1.5-1.5 3.5-.5 5.5 1.5 3 6 4.5 10.5 2.5.8-.4 1.3.3.8 1.2-2 3-5 3.8-7 3.6-4-.4-6.8-2.8-7.3-6.3z" fill="#10559f" />
      </svg>
    ),
  },
  {
    name: "VS Code", open: true,
    icon: (
      <svg width="26" height="26" viewBox="0 0 26 26">
        <path d="M3.5 7l-2 1v2.5L18 25v-7z" fill="#0a6cb5" />
        <path d="M1.5 15.5V18l2 1L18 8V1z" fill="#1d8ddb" />
        <path d="M18 1l6 2.5v19L18 25z" fill="#2ca5ef" />
      </svg>
    ),
  },
  { name: "Jupyter", open: true, icon: <JupyterMark size={25} moons /> },
  {
    name: "Chrome", open: true,
    icon: (
      <svg width="25" height="25" viewBox="0 0 24 24">
        <path d="M12 12L1.6 6A12 12 0 0 1 22.4 6z" fill="#ea4335" /><path d="M12 12L22.4 6A12 12 0 0 1 12 24z" fill="#fbbc04" />
        <path d="M12 12v12A12 12 0 0 1 1.6 6z" fill="#34a853" /><path d="M12 6.5h10.7L22.4 6A12 12 0 0 0 1.6 6l5.6 8.5z" fill="#ea4335" />
        <path d="M16.8 14.8L12 24A12 12 0 0 0 22.7 6.5H12z" fill="#fbbc04" />
        <circle cx="12" cy="12" r="5.6" fill="#fff" /><circle cx="12" cy="12" r="4.4" fill="#2b7de9" />
      </svg>
    ),
  },
  {
    name: "Terminal", open: true,
    icon: (
      <svg width="24" height="24" viewBox="0 0 24 24">
        <rect x="0.5" y="1.5" width="23" height="21" fill="#000" stroke="#999" /><path d="M1 3h22" stroke="#ccc" strokeWidth="2" />
        <path d="M5 7.5H3v3h2M7 8v.6M7 10v.6M9 7l1.5 4M12 11h5" stroke="#fff" fill="none" />
      </svg>
    ),
  },
];

function TaskButton({ app }) {
  const bg = app.active ? "flex h-full w-12 items-center justify-center bg-[#f3f2f4]" : "flex h-full w-10 items-center justify-center";
  const line = app.active ? "absolute bottom-0 h-0.5 w-12 bg-[#0078d7]" : "absolute bottom-0 h-0.5 w-10 bg-[#0078d7]";
  return (
    <button type="button" aria-label={app.name} className="relative flex h-full w-[49px] items-center justify-center">
      <span className={bg}>{app.icon}</span>
      {app.open && <span className={line} />}
    </button>
  );
}

function Taskbar() {
  return (
    <footer className="flex h-10 shrink-0 items-center bg-[linear-gradient(to_right,#d8d6dc,#dfd8d6_14%,#e4dad2_32%,#dad8de_48%,#dcdade_68%,#dadcea_80%,#dcdce0)] font-['Open_Sans','Noto_Sans',sans-serif] text-xs text-black">
      <button type="button" aria-label="Start" className="flex w-12 justify-center">
        <svg width="16" height="16" viewBox="0 0 16 16"><path d="M0 2.2L6.5 1.3v6.2H0zM7.3 1.2L16 0v7.5H7.3zM0 8.3h6.5v6.2L0 13.7zM7.3 8.3H16V16l-8.7-1.2z" /></svg>
      </button>
      <button type="button" aria-label="Search" className="flex w-12 justify-center">
        <svg width="24" height="24" viewBox="0 0 24 24" fill="none" stroke="#000" strokeWidth="2"><circle cx="14" cy="9.5" r="7.8" /><path d="M8.5 15L2 22" strokeWidth="2.4" /></svg>
      </button>
      <button type="button" aria-label="Task view" className="mr-0.5 flex w-12 justify-center">
        <svg width="18" height="18" viewBox="0 0 18 18" fill="none" stroke="#000" strokeWidth="1.3">
          <rect x="1.5" y="5.5" width="10" height="7" /><path d="M1.5 0v3h10V0M1.5 18v-3h10v3M15.5 0v3M15.5 9.5V18" /><path d="M15.5 5v4" strokeWidth="3" />
        </svg>
      </button>
      {APPS.map((a) => <TaskButton key={a.name} app={a} />)}
      <div className="ml-auto flex h-full items-center">
        <svg width="24" height="26" viewBox="0 0 24 26" aria-hidden="true">
          <defs><linearGradient id="sun" x1="0" y1="0" x2="0.6" y2="1"><stop offset="0" stopColor="#fdbb2c" /><stop offset="0.5" stopColor="#f79a1e" /><stop offset="1" stopColor="#ee6510" /></linearGradient></defs>
          <circle cx="11" cy="15" r="10" fill="url(#sun)" /><circle cx="17" cy="7.5" r="6" fill="#c42b1c" />
          <path d="M15.5 6l2-1.5v6" stroke="#fff" fill="none" strokeWidth="1.2" />
        </svg>
        <span className="ml-1.5 w-9 text-[13px]">21°C</span>
        <span className="w-[46px] text-[13px]" lang="ar" dir="rtl">مشمس</span>
        <span className="ml-2 w-3 text-[13px]">)</span>
        <svg className="ml-[3px]" width="16" height="18" viewBox="0 0 16 18" fill="none" stroke="#000" strokeWidth="1.3"><rect x="2.5" y="4.5" width="8" height="9" rx="2" /><path d="M11 8l2.5-1.5v5L11 10M3 2q4-2 8 0M3 16q4 2 8 0" /></svg>
        <svg className="ml-[7px]" width="17" height="14" viewBox="0 0 17 14"><path d="M4 13a3.5 3.5 0 0 1-.5-7A5 5 0 0 1 13 5.500 3.800 3.800 0 0 1 13 13z" fill="#f0f0f0" stroke="#222" /><path d="M3.5 6.5A5 5 0 0 1 13 5.5l-4 2z" fill="#555" /></svg>
        <svg className="ml-[7px]" width="18" height="14" viewBox="0 0 18 14"><path d="M6 4.5h10v7H4" fill="none" stroke="#000" strokeWidth="1.2" /><path d="M7 6h7.5v4H6zM16 6.5h1.5v3H16zM1 3h5v3q0 2-2.5 2T1 6zM2 .5h1V3H2zM4 .5h1V3H4zM3 8h1v4H3z" /></svg>
        <svg className="ml-[7px]" width="17" height="16" viewBox="0 0 17 16" fill="none" stroke="#222" strokeWidth="1.2"><path d="M1 14A13 13 0 0 1 14 2M4 14.5A10 10 0 0 1 14 5.5M7 14.5A7 7 0 0 1 14 8.8M10 14.5a4 4 0 0 1 4-3" /><circle cx="13" cy="14" r="1" fill="#222" /></svg>
        <svg className="ml-[7px]" width="18" height="16" viewBox="0 0 18 16" fill="none" stroke="#000" strokeWidth="1.2"><path d="M1 5.5h2.5L7.5 2v12l-4-3.5H1zM10 6q1.5 2 0 4M12 4q3 4 0 8M14.5 2.5q4 5.500 0 11" /></svg>
        <span className="ml-2 w-6">ENG</span>
        <div className="ml-2.5 w-[56px] text-center leading-[18px]"><div>2:26 PM</div><div>3/2/2025</div></div>
        <svg className="ml-[18px]" width="20" height="18" viewBox="0 0 20 18" aria-hidden="true"><path d="M1 1h2.5v16H1zM16.5 1H19v16h-2.5zM6 17V5l4 5 4-5v12h-2v-7l-2 2.5L8 10v7z" fill="#fff" /></svg>
        <button type="button" aria-label="Notifications" className="ml-[25px] mr-[17px]">
          <svg width="25" height="26" viewBox="0 0 25 26">
            <path d="M1 3h16v14h-8v4l-4-4H1z" /><path d="M4 6.5h10M4 9.5h10M4 12.5h6" stroke="#fff" />
            <circle cx="16.5" cy="17.5" r="7.5" fill="#d9d9dc" stroke="#666" /><path d="M14.5 15l2.2-1.5v8" stroke="#000" fill="none" strokeWidth="1.3" />
          </svg>
        </button>
      </div>
    </footer>
  );
}

export default function App() {
  return (
    <div className="flex h-screen flex-col overflow-hidden">
      <BrowserTop />
      <Page />
      <Taskbar />
    </div>
  );
}
